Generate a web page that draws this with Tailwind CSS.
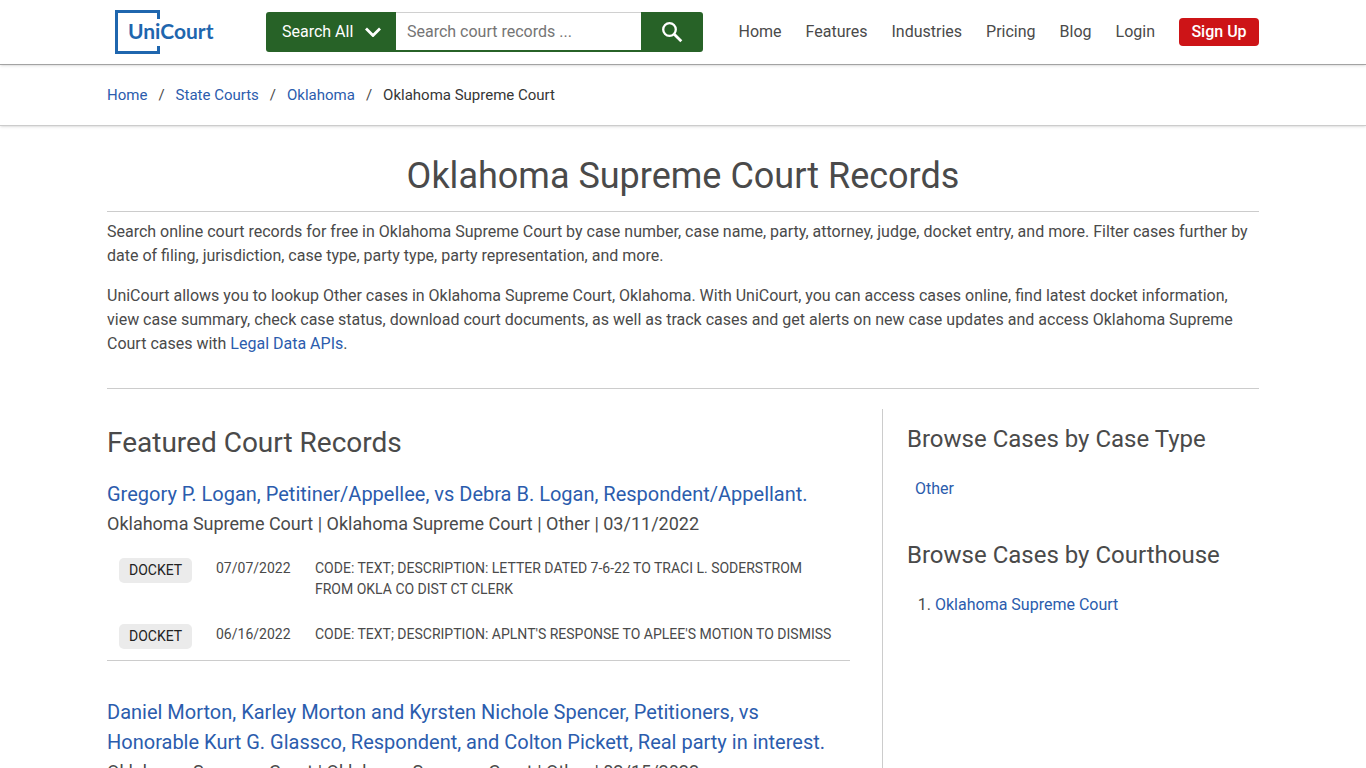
<!DOCTYPE html>
<html lang="en">
<head>
<meta charset="utf-8">
<meta name="viewport" content="width=device-width, initial-scale=1">
<title>Oklahoma Supreme Court Records</title>
<script src="https://cdn.jsdelivr.net/npm/@tailwindcss/browser@4"></script>
</head>
<body class="bg-white font-['Roboto',sans-serif] text-base text-[#4a4a4a]">
<header class="border-b border-[#a6a6a6] shadow-sm">
  <div class="mx-auto flex h-16 max-w-6xl items-center pl-2">
    <a href="#" aria-label="UniCourt" class="shrink-0 text-[#1f66ae]">
      <svg width="100" height="44" viewBox="0 0 100 44" class="block">
        <path d="M43.500 9V1.500H1.500v41h42V36" fill="none" stroke="currentColor" stroke-width="3"/>
        <text x="13" y="29" font-family="Lato" font-weight="700" font-size="21" fill="currentColor">UniCourt</text>
      </svg>
    </a>
    <form class="ml-[51px] flex h-10 w-[437px] shrink-0 overflow-hidden rounded-[3px]">
      <button type="button" class="flex w-[130px] items-center gap-3 bg-[#276227] pl-4 text-white">Search All
        <svg width="16" height="10" viewBox="0 0 16 10" fill="none" stroke="currentColor" stroke-width="2.800"><path d="M1 1.500 8 8.500 15 1.500"/></svg>
      </button>
      <input type="text" aria-label="Search court records" placeholder="Search court records ..." class="min-w-0 flex-1 border-t border-b-2 border-t-[#d0d0d0] border-b-[#276227] px-[11px] outline-none placeholder:text-[#757575]">
      <button type="submit" aria-label="Search" class="flex w-[62px] items-center justify-center bg-[#276227] text-white">
        <svg width="22" height="22" viewBox="0 0 22 22" fill="none" stroke="currentColor"><circle cx="8.500" cy="8.500" r="6.300" stroke-width="2.300"/><path d="M13 13l7.300 7.300" stroke-width="2.800"/></svg>
      </button>
    </form>
    <nav class="ml-auto flex items-center gap-6">
      <a href="#">Home</a>
      <a href="#">Features</a>
      <a href="#">Industries</a>
      <a href="#">Pricing</a>
      <a href="#">Blog</a>
      <a href="#">Login</a>
      <a href="#" class="flex h-7 w-20 items-center justify-center rounded bg-[#cd1417] font-medium text-white">Sign Up</a>
    </nav>
  </div>
</header>
<nav aria-label="Breadcrumb" class="border-b border-[#cccccc] shadow-sm">
  <ol class="mx-auto flex h-[60px] max-w-6xl items-center gap-[11px] text-[15px]">
    <li><a href="#" class="text-[#2b5cad]">Home</a></li><li>/</li>
    <li><a href="#" class="text-[#2b5cad]">State Courts</a></li><li>/</li>
    <li><a href="#" class="text-[#2b5cad]">Oklahoma</a></li><li>/</li>
    <li class="text-[#363636]">Oklahoma Supreme Court</li>
  </ol>
</nav>
<main class="mx-auto max-w-6xl pb-12">
  <h1 class="border-b border-[#cccccc] pt-6 pb-2 text-center text-4xl leading-[53px]">Oklahoma Supreme Court Records</h1>
  <div class="space-y-4 border-b border-[#cccccc] pt-2 pb-8">
    <p>Search online court records for free in Oklahoma Supreme Court by case number, case name, party, attorney, judge, docket entry, and more. Filter cases further by date of filing, jurisdiction, case type, party type, party representation, and more.</p>
    <p>UniCourt allows you to lookup Other cases in Oklahoma Supreme Court, Oklahoma. With UniCourt, you can access cases online, find latest docket information, view case summary, check case status, download court documents, as well as track cases and get alerts on new case updates and access Oklahoma Supreme Court cases with <a href="#" class="text-[#2b5cad]">Legal Data APIs</a>.</p>
  </div>
  <div class="mt-5 flex">
    <section class="flex-1 pr-8">
      <h2 class="pt-4 text-[28px] leading-9">Featured Court Records</h2>
      <article class="mt-[18px] border-b border-[#cccccc] pb-[11px]">
        <h3 class="text-xl leading-[30px]"><a href="#" class="text-[#2b5cad]">Gregory P. Logan, Petitiner/Appellee, vs Debra B. Logan, Respondent/Appellant.</a></h3>
        <p class="text-lg leading-[30px]">Oklahoma Supreme Court | Oklahoma Supreme Court | Other | 03/11/2022</p>
        <table class="mt-[19px] w-full text-sm leading-[21px]">
          <tbody>
            <tr class="align-top">
              <td class="w-[109px] pb-6 pl-3"><span class="inline-block rounded-[5px] bg-[#ebebeb] px-[10px] leading-[25px] text-[#222222]">DOCKET</span></td>
              <td class="w-[99px] pb-6">07/07/2022</td>
              <td class="pb-6">CODE: TEXT; DESCRIPTION: LETTER DATED 7-6-22 TO TRACI L. SODERSTROM<br>FROM OKLA CO DIST CT CLERK</td>
            </tr>
            <tr class="align-top">
              <td class="pl-3"><span class="inline-block rounded-[5px] bg-[#ebebeb] px-[10px] leading-[25px] text-[#222222]">DOCKET</span></td>
              <td>06/16/2022</td>
              <td>CODE: TEXT; DESCRIPTION: APLNT'S RESPONSE TO APLEE'S MOTION TO DISMISS</td>
            </tr>
          </tbody>
        </table>
      </article>
      <article class="mt-9">
        <h3 class="text-xl leading-[30px]"><a href="#" class="text-[#2b5cad]">Daniel Morton, Karley Morton and Kyrsten Nichole Spencer, Petitioners, vs Honorable Kurt G. Glassco, Respondent, and Colton Pickett, Real party in interest.</a></h3>
        <p class="text-lg leading-[30px]">Oklahoma Supreme Court | Oklahoma Supreme Court | Other | 02/15/2022</p>
      </article>
    </section>
    <aside class="w-[377px] shrink-0 border-l border-[#cccccc] pl-6">
      <h2 class="pt-3 text-2xl leading-9">Browse Cases by Case Type</h2>
      <ul class="mt-5 pl-2"><li><a href="#" class="text-[#2b5cad]">Other</a></li></ul>
      <h2 class="mt-9 text-2xl leading-9">Browse Cases by Courthouse</h2>
      <ol class="mt-5 list-decimal pl-7"><li><a href="#" class="text-[#2b5cad]">Oklahoma Supreme Court</a></li></ol>
    </aside>
  </div>
</main>
</body>
</html>
